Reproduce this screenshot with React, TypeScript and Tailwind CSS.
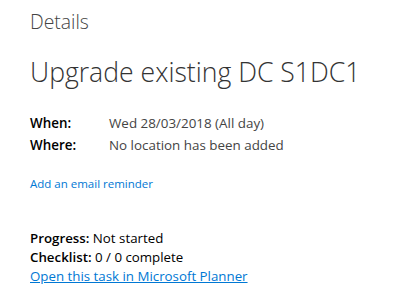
import React from "react";

export default function App() {
  const font = { fontFamily: '"Open Sans", "Noto Sans", "Liberation Sans", sans-serif' };
  return (
    <div className="w-[411px] h-[302px] bg-white overflow-hidden pl-[30px]" style={font}>
      <div className="pt-[8px] text-[19.4px] leading-[28px] font-light text-[#444]">Details</div>
      <div className="mt-[18px] text-[26.6px] leading-[36px] font-light text-[#333]">
        Upgrade existing DC S1DC1
      </div>
      <div className="mt-[22px] text-[13.4px] leading-[22px]">
        <div className="flex">
          <span className="w-[79px] font-semibold text-black">When:</span>
          <span className="text-[#444]">Wed 28/03/2018 (All day)</span>
        </div>
        <div className="flex">
          <span className="w-[79px] font-semibold text-black">Where:</span>
          <span className="text-[#444]">No location has been added</span>
        </div>
      </div>
      <div className="mt-[20px] text-[11.5px] leading-[16px] text-[#0078d4]">Add an email reminder</div>
      <div className="mt-[37px] text-[13.3px] leading-[19px] text-black">
        <div>
          <span className="font-semibold">Progress:</span> Not started
        </div>
        <div>
          <span className="font-semibold">Checklist:</span> 0 / 0 complete
        </div>
        <div className="text-[#0078d4] underline">Open this task in Microsoft Planner</div>
      </div>
    </div>
  );
}
